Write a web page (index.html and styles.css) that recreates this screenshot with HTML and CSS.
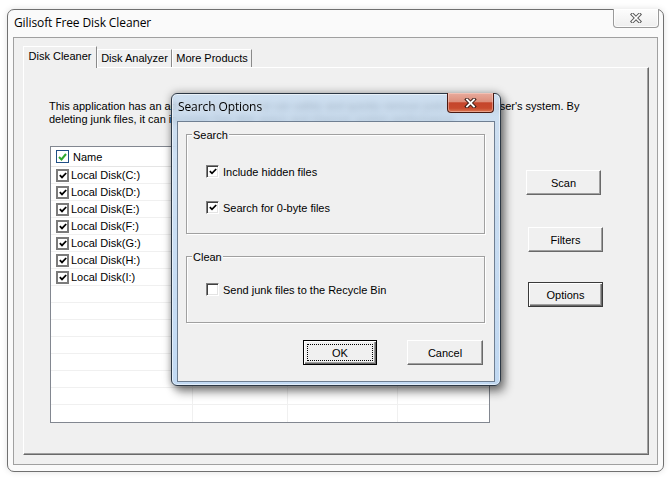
FILE: index.html
```html
<!DOCTYPE html>
<html>
<head>
<meta charset="utf-8">
<title>Gilisoft Free Disk Cleaner</title>
<link rel="stylesheet" href="styles.css">
</head>
<body>
<div class="window main">
  <div class="titlebar">
    <span class="title">Gilisoft Free Disk Cleaner</span>
    <div class="close close-light">
      <svg width="12" height="10" viewBox="0 0 12 10"><path d="M2.5 1.5L9.5 8.5M9.5 1.5L2.5 8.5" stroke="#5a5a5a" stroke-width="3.6" stroke-linecap="square"/><path d="M2.5 1.5L9.5 8.5M9.5 1.5L2.5 8.5" stroke="#fff" stroke-width="1.6" stroke-linecap="square"/></svg>
    </div>
  </div>
  <div class="client">
    <div class="tabs">
      <div class="tab active">Disk Cleaner</div>
      <div class="tab">Disk Analyzer</div>
      <div class="tab">More Products</div>
    </div>
    <div class="panel">
      <p class="desc">This application has an advanced engine that can safely and quickly remove junk files on a user's system. By<br>deleting junk files, it can increase free disk space and improve system performance.</p>
      <div class="work">
        <div class="list">
          <div class="row head">
            <div class="cell"><span class="cb-head"><svg width="9" height="8" viewBox="0 0 9 8"><path d="M1 4L3.5 6.5L8 1" fill="none" stroke="#2ea82e" stroke-width="2"/></svg></span><span class="label">Name</span></div>
            <div class="cell"></div><div class="cell"></div><div class="cell"></div>
          </div>
          <div class="row"><div class="cell"><span class="cb-list"><svg width="8" height="7" viewBox="0 0 8 7"><path d="M0.8 3.2L3 5.4L7.2 1" fill="none" stroke="#000" stroke-width="1.8"/></svg></span><span class="label">Local Disk(C:)</span></div><div class="cell"></div><div class="cell"></div><div class="cell"></div></div>
          <div class="row"><div class="cell"><span class="cb-list"><svg width="8" height="7" viewBox="0 0 8 7"><path d="M0.8 3.2L3 5.4L7.2 1" fill="none" stroke="#000" stroke-width="1.8"/></svg></span><span class="label">Local Disk(D:)</span></div><div class="cell"></div><div class="cell"></div><div class="cell"></div></div>
          <div class="row"><div class="cell"><span class="cb-list"><svg width="8" height="7" viewBox="0 0 8 7"><path d="M0.8 3.2L3 5.4L7.2 1" fill="none" stroke="#000" stroke-width="1.8"/></svg></span><span class="label">Local Disk(E:)</span></div><div class="cell"></div><div class="cell"></div><div class="cell"></div></div>
          <div class="row"><div class="cell"><span class="cb-list"><svg width="8" height="7" viewBox="0 0 8 7"><path d="M0.8 3.2L3 5.4L7.2 1" fill="none" stroke="#000" stroke-width="1.8"/></svg></span><span class="label">Local Disk(F:)</span></div><div class="cell"></div><div class="cell"></div><div class="cell"></div></div>
          <div class="row"><div class="cell"><span class="cb-list"><svg width="8" height="7" viewBox="0 0 8 7"><path d="M0.8 3.2L3 5.4L7.2 1" fill="none" stroke="#000" stroke-width="1.8"/></svg></span><span class="label">Local Disk(G:)</span></div><div class="cell"></div><div class="cell"></div><div class="cell"></div></div>
          <div class="row"><div class="cell"><span class="cb-list"><svg width="8" height="7" viewBox="0 0 8 7"><path d="M0.8 3.2L3 5.4L7.2 1" fill="none" stroke="#000" stroke-width="1.8"/></svg></span><span class="label">Local Disk(H:)</span></div><div class="cell"></div><div class="cell"></div><div class="cell"></div></div>
          <div class="row"><div class="cell"><span class="cb-list"><svg width="8" height="7" viewBox="0 0 8 7"><path d="M0.8 3.2L3 5.4L7.2 1" fill="none" stroke="#000" stroke-width="1.8"/></svg></span><span class="label">Local Disk(I:)</span></div><div class="cell"></div><div class="cell"></div><div class="cell"></div></div>
          <div class="row"><div class="cell"></div><div class="cell"></div><div class="cell"></div><div class="cell"></div></div>
          <div class="row"><div class="cell"></div><div class="cell"></div><div class="cell"></div><div class="cell"></div></div>
          <div class="row"><div class="cell"></div><div class="cell"></div><div class="cell"></div><div class="cell"></div></div>
          <div class="row"><div class="cell"></div><div class="cell"></div><div class="cell"></div><div class="cell"></div></div>
          <div class="row"><div class="cell"></div><div class="cell"></div><div class="cell"></div><div class="cell"></div></div>
          <div class="row"><div class="cell"></div><div class="cell"></div><div class="cell"></div><div class="cell"></div></div>
          <div class="row"><div class="cell"></div><div class="cell"></div><div class="cell"></div><div class="cell"></div></div>
          <div class="row last"><div class="cell"></div><div class="cell"></div><div class="cell"></div><div class="cell"></div></div>
        </div>
        <div class="actions">
          <button class="btn btn-scan">Scan</button>
          <button class="btn btn-filters">Filters</button>
          <button class="btn btn-options">Options</button>
        </div>
      </div>
    </div>
  </div>
</div>

<div class="window dialog">
  <div class="titlebar dlg-titlebar">
    <span class="title">Search Options</span>
    <div class="close close-red">
      <svg width="13" height="10" viewBox="0 0 13 10"><path d="M3 1.5L10 8.5M10 1.5L3 8.5" stroke="#3a1a14" stroke-width="3.8" stroke-linecap="square"/><path d="M3 1.5L10 8.5M10 1.5L3 8.5" stroke="#fff" stroke-width="1.8" stroke-linecap="square"/></svg>
    </div>
  </div>
  <div class="dlg-client">
    <div class="group group-search">
      <div class="group-title">Search</div>
      <label class="opt"><span class="cb"><svg width="8" height="7" viewBox="0 0 8 7"><path d="M0.8 3.2L3 5.4L7.2 1" fill="none" stroke="#000" stroke-width="1.7"/></svg></span><span class="opt-text">Include hidden files</span></label>
      <label class="opt"><span class="cb"><svg width="8" height="7" viewBox="0 0 8 7"><path d="M0.8 3.2L3 5.4L7.2 1" fill="none" stroke="#000" stroke-width="1.7"/></svg></span><span class="opt-text">Search for 0-byte files</span></label>
    </div>
    <div class="group group-clean">
      <div class="group-title">Clean</div>
      <label class="opt"><span class="cb"></span><span class="opt-text">Send junk files to the Recycle Bin</span></label>
    </div>
    <div class="dlg-buttons">
      <button class="btn btn-default btn-ok"><span class="focus">OK</span></button>
      <button class="btn btn-cancel">Cancel</button>
    </div>
  </div>
</div>
</body>
</html>
```

FILE: styles.css
```css
* { box-sizing: border-box; }
html, body { margin: 0; padding: 0; }
body {
  width: 672px;
  height: 481px;
  background: #ffffff;
  font-family: "Liberation Sans", Arial, sans-serif;
  font-size: 11px;
  color: #000;
  position: relative;
  overflow: hidden;
}

.window {
  position: absolute;
  display: flex;
  flex-direction: column;
}

/* main window */
.main {
  left: 7px;
  top: 9px;
  width: 657px;
  height: 463px;
  border: 1px solid #707070;
  border-radius: 7px;
  background: #fafafa;
  padding: 0 5px 6px;
  box-shadow: 0 0 6px rgba(0, 0, 0, 0.12);
}

.titlebar {
  display: flex;
  align-items: flex-start;
  height: 27px;
  margin: 0 -5px;
  padding-left: 6px;
  flex: none;
}
.title {
  font-family: "Open Sans", "Noto Sans", sans-serif;
  font-size: 12px;
  line-height: 25px;
  letter-spacing: -0.1px;
}

.close {
  margin-left: auto;
  margin-top: -1px;
  display: flex;
  align-items: center;
  justify-content: center;
}
.close-light {
  width: 46px;
  height: 19px;
  margin-right: 4px;
  border: 1px solid #9a9a9a;
  border-top: none;
  border-radius: 0 0 4px 4px;
  background: linear-gradient(#fdfdfd, #eeeeee);
  box-shadow: inset 0 0 0 1px rgba(255, 255, 255, 0.8);
}

.client {
  flex: 1;
  display: flex;
  flex-direction: column;
  border: 1px solid #a0a0a0;
  background: #f0f0f0;
  padding: 8px 8px 9px 9px;
}

.tabs {
  display: flex;
  align-items: flex-end;
  height: 22px;
  margin-bottom: -1px;
  flex: none;
  position: relative;
  z-index: 1;
}
.tab {
  height: 18px;
  margin-bottom: 1px;
  border: 1px solid;
  border-color: #ffffff #8a8a8a transparent #ffffff;
  border-bottom: none;
  background: #f0f0f0;
  text-align: center;
  line-height: 16px;
  white-space: nowrap;
}
.tab:nth-child(1) { width: 74px; }
.tab:nth-child(2) { width: 75px; }
.tab:nth-child(3) { width: 80px; }
.tab.active {
  height: 22px;
  margin-bottom: 0;
  padding-top: 1px;
  line-height: 16px;
}

.panel {
  flex: 1;
  border: 1px solid;
  border-color: #ffffff #696969 #696969 #ffffff;
  box-shadow: inset -1px -1px #a0a0a0;
  padding: 32px 0 0 26px;
}

.desc {
  margin: 0 0 0 -1px;
  line-height: 13px;
  white-space: nowrap;
}

.work {
  display: flex;
  align-items: flex-start;
  margin-top: 20px;
}

.list {
  width: 440px;
  height: 277px;
  border: 1px solid #828790;
  background: #ffffff;
  display: flex;
  flex-direction: column;
  overflow: hidden;
}
.row {
  display: grid;
  grid-template-columns: 142px 95px 110px 1fr;
  height: 17px;
  border-bottom: 1px solid #f0f0f0;
  flex: none;
}
.row.head {
  height: 20px;
  border-bottom: 1px solid #e5e5e5;
}
.row.last { border-bottom: none; }
.cell {
  display: flex;
  align-items: center;
  border-right: 1px solid #f0f0f0;
  padding-left: 5px;
  min-width: 0;
}
.cell:last-child { border-right: none; }
.head .cell { border-right-color: #e5e5e5; }
.label {
  margin-left: 2px;
  white-space: nowrap;
}
.head .label { margin-left: 4px; }

.cb-head {
  width: 13px;
  height: 13px;
  border: 1px solid #1f4f86;
  background: #ffffff;
  display: flex;
  align-items: center;
  justify-content: center;
}
.cb-list {
  width: 13px;
  height: 13px;
  border: 2px solid #7b7b7b;
  background: #ffffff;
  display: flex;
  align-items: center;
  justify-content: center;
}

.actions {
  display: flex;
  flex-direction: column;
  align-items: flex-start;
  margin-left: 36px;
  padding-top: 24px;
}

.btn {
  font-family: "Liberation Sans", Arial, sans-serif;
  font-size: 11px;
  color: #000;
  width: 75px;
  height: 25px;
  padding: 0;
  background: #f0f0f0;
  border: 1px solid;
  border-color: #ffffff #696969 #696969 #ffffff;
  box-shadow: inset -1px -1px #a0a0a0;
  border-radius: 0;
}
.btn-filters { margin: 32px 0 0 2px; }
.btn-options {
  margin: 30px 0 0 2px;
  border: 1px solid #3a3a3a;
  box-shadow: inset 1px 1px #ffffff, inset -1px -1px #696969, inset -2px -2px #a0a0a0;
}

/* dialog */
.dialog {
  left: 171px;
  top: 93px;
  width: 330px;
  height: 293px;
  border: 1px solid #2c3845;
  border-radius: 6px;
  padding: 0 5px 3px;
  background: linear-gradient(rgba(196, 218, 240, 0.78), rgba(186, 213, 242, 0.88));
  -webkit-backdrop-filter: blur(3px);
  backdrop-filter: blur(3px);
  box-shadow: inset 0 0 0 1px rgba(255, 255, 255, 0.55), 0 0 8px rgba(0, 0, 0, 0.35), 4px 6px 10px rgba(0, 0, 0, 0.45);
}
.dlg-titlebar .title {
  line-height: 26px;
  text-shadow: 0 0 6px rgba(255, 255, 255, 0.9);
}
.close-red {
  width: 47px;
  height: 20px;
  margin-right: 6px;
  border: 1px solid #4a1a12;
  border-top: none;
  border-radius: 0 0 4px 4px;
  background: linear-gradient(#e8ab9d 0%, #dd8f7c 45%, #c5452b 52%, #c84a2e 80%, #dc7a55 100%);
  box-shadow: inset 0 0 0 1px rgba(255, 220, 210, 0.45);
}

.dlg-client {
  flex: 1;
  border: 1px solid #6f7f92;
  background: #f0f0f0;
  padding: 12px 9px 0 8px;
  display: flex;
  flex-direction: column;
}

.group {
  border: 1px solid #a0a0a0;
  box-shadow: inset 1px 1px #ffffff, 1px 1px #ffffff;
}
.group-search { padding-bottom: 19px; }
.group-clean { margin-top: 22px; padding-bottom: 26px; }
.group-title {
  display: table;
  margin: -6px 0 0 5px;
  padding: 0 1px;
  background: #f0f0f0;
  line-height: 13px;
}
.opt {
  display: flex;
  align-items: center;
  height: 13px;
  margin: 23px 0 0 19px;
}
.group-clean .opt { margin-top: 19px; }
.cb {
  width: 13px;
  height: 13px;
  border: 1px solid;
  border-color: #808080 #ffffff #ffffff #808080;
  box-shadow: inset 1px 1px #404040, inset -1px -1px #e3e3e3;
  background: #ffffff;
  display: flex;
  align-items: center;
  justify-content: center;
}
.opt-text {
  margin-left: 4px;
  white-space: nowrap;
}

.dlg-buttons {
  display: flex;
  justify-content: flex-end;
  gap: 30px;
  margin-top: 17px;
  padding-right: 2px;
}
.btn-ok {
  width: 74px;
  border: 1px solid #000;
  box-shadow: inset 1px 1px #ffffff, inset -1px -1px #696969, inset -2px -2px #a0a0a0;
  padding: 3px;
  display: flex;
}
.focus {
  flex: 1;
  display: flex;
  align-items: center;
  justify-content: center;
  border: 1px dotted #000;
}
.btn-cancel { width: 76px; }
```
